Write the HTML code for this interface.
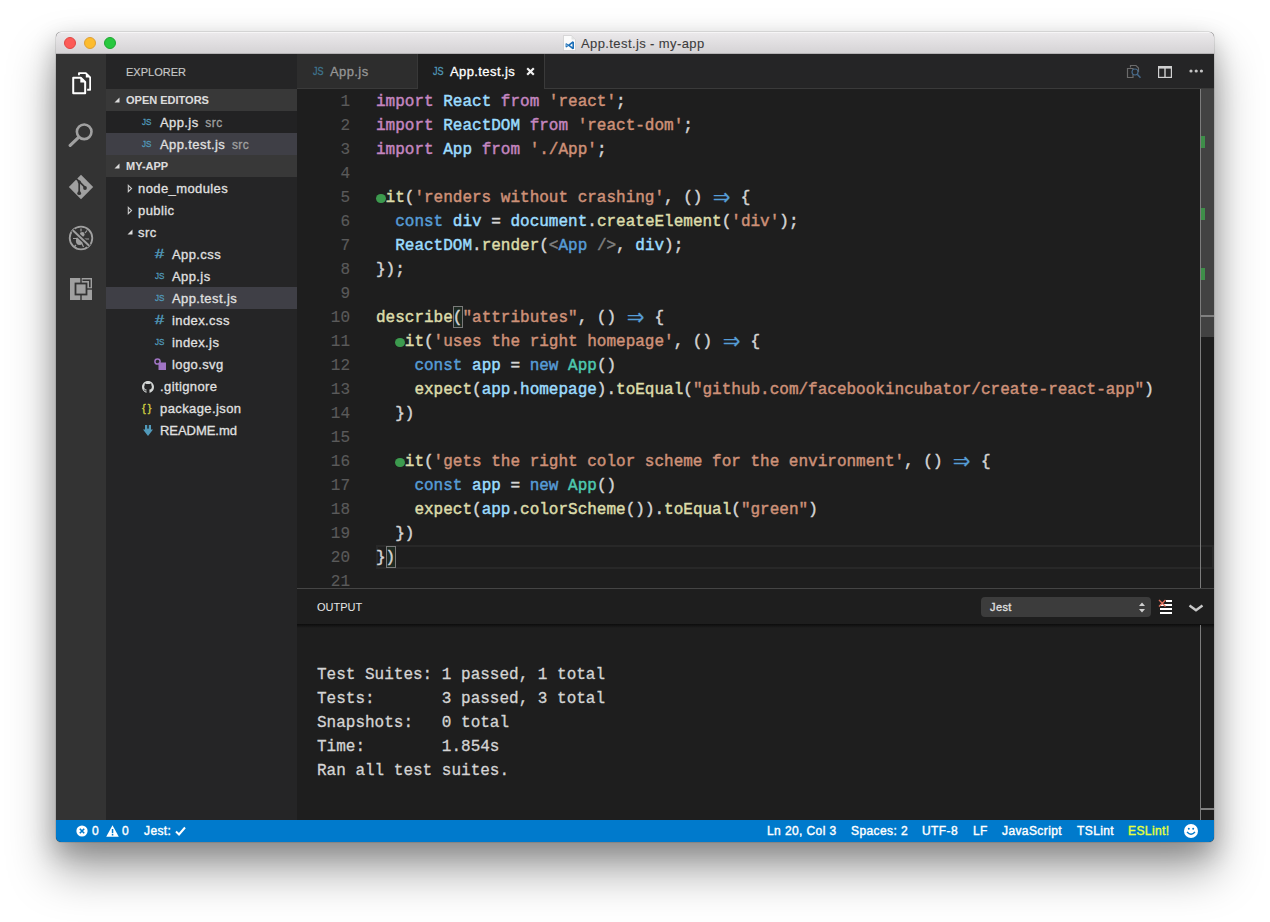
<!DOCTYPE html>
<html><head><meta charset="utf-8"><title>App.test.js - my-app</title>
<style>
*{box-sizing:border-box;margin:0;padding:0}
html,body{width:1270px;height:922px;background:#fff;overflow:hidden}
body{font-family:"Liberation Sans",sans-serif;position:relative;-webkit-font-smoothing:antialiased;letter-spacing:.4px;-webkit-text-stroke-width:.3px}
#win{position:absolute;left:56px;top:32px;width:1158px;height:810px;border-radius:5px;background:#1e1e1e;
 box-shadow:0 0 0 .5px rgba(0,0,0,.18),0 28px 46px 2px rgba(0,0,0,.34),0 10px 24px 2px rgba(0,0,0,.2);}
#clip{position:absolute;inset:0;border-radius:5px;overflow:hidden}
.abs{position:absolute}
#title{left:0;top:0;width:1158px;height:22px;background:linear-gradient(#ebe9eb,#d5d3d5);border-bottom:1px solid #b4b2b4;border-top:1px solid #f6f5f6}
#title .tl{position:absolute;top:4px;width:12px;height:12px;border-radius:50%}
#title .t{position:absolute;left:525px;top:3px;font-size:13px;line-height:15px;color:#3c3c3c;white-space:nowrap;-webkit-text-stroke-width:.1px}
#act{left:0;top:22px;width:50px;height:766px;background:#333333}
#side{left:50px;top:22px;width:191px;height:766px;background:#252526}
#side .hd{position:absolute;left:0;width:191px;height:22px;background:#383838;color:#dcdcdc;font-size:11px;font-weight:bold;line-height:22px;padding-left:20px;letter-spacing:0;-webkit-text-stroke-width:.1px}
#side .row{position:absolute;left:0;width:191px;height:22px;font-size:13px;line-height:22px;color:#e0e0e0;white-space:nowrap}
#side .row.sel{background:#3f3f46}
#side .row.dk{background:#222223}
#side .row span.n{position:absolute;top:1px}
#side .row span.d{color:#a0a0a0;font-size:12px}
.ic{position:absolute;top:0;font-size:9.4px;font-weight:normal;color:#519aba;letter-spacing:0;-webkit-text-stroke-width:.3px;transform:scaleX(.86);transform-origin:0 50%}
#tabs{left:241px;top:22px;width:917px;height:35px;background:#252526}
#edit{left:241px;top:57px;width:917px;height:500px;background:#1e1e1e}
.code{letter-spacing:0;font-family:"Liberation Mono",monospace;font-size:16px;line-height:24px;white-space:pre;-webkit-text-stroke-width:.45px}
#edit .ln{margin-top:1px;position:absolute;left:0;width:53px;text-align:right;color:#5a5a5a;-webkit-text-stroke-width:.15px}
#edit .cl{margin-top:1px;position:absolute;left:79px;color:#d4d4d4}
.k{color:#c586c0}.v{color:#9cdcfe}.s{color:#ce9178}.b{color:#569cd6}.f{color:#dcdcaa}.c{color:#4ec9b0}.g{color:#808080}
.ar{display:inline-block;width:19.2px;text-align:center;color:#569cd6;transform:scale(1.8,1.9);-webkit-text-stroke-width:.1px}
.dot{display:inline-block;width:9.6px;height:9px;border-radius:50%;background:#3c9a4e;vertical-align:-0.5px}
#panel{left:241px;top:556px;width:917px;height:232px;background:#1e1e1e;border-top:1px solid #454545}
#status{left:0;top:788px;width:1158px;height:22px;background:#007acc;color:#fff;font-size:12px;line-height:22px;white-space:nowrap;-webkit-text-stroke-width:.4px}
#status span{position:absolute;top:0}
</style></head><body>
<div id="win"><div id="clip">
<div id="title" class="abs">
 <div class="tl" style="left:8px;background:#fc5b57;border:1px solid #df4744"></div>
 <div class="tl" style="left:28px;background:#fdbc2e;border:1px solid #de9f34"></div>
 <div class="tl" style="left:48px;background:#28c83f;border:1px solid #1ea631"></div>
 <svg class="abs" style="left:507px;top:2px" width="13" height="16" viewBox="0 0 13 16"><path d="M.5 .5H8.5L12.5 4.5V15.5H.5Z" fill="#fbfbfb" stroke="#c4c4c4" stroke-width=".6"/><path d="M8.5 .5V4.5H12.5Z" fill="#e2e2e2"/><path d="M9.6 6.3L5.4 9.6L3.4 8.2L2.6 8.6V12L3.4 12.4L5.4 11L9.6 14.3L11 13.7V6.9ZM9.4 8.6V12L7 10.3ZM3.6 9.3L4.6 10.3L3.6 11.3Z" fill="#1b6fb8" fill-rule="evenodd"/></svg>
 <div class="t">App.test.js - my-app</div>
</div>
<div id="act" class="abs">
 <svg class="abs" style="left:15.6px;top:18.2px" width="19.4" height="22.8" viewBox="0 0 21 25"><path d="M7.5 3.5V1.2H15L19.8 6V19.5H16.5" fill="none" stroke="#fff" stroke-width="2" stroke-linejoin="round"/><path d="M15 1.2V6H19.8Z" fill="#fff"/><path d="M1.2 6.2H9.5L14.3 11V23.3H1.2Z" fill="none" stroke="#fff" stroke-width="2.2" stroke-linejoin="round"/><path d="M9 6.2V11.5H14.3Z" fill="#fff"/></svg>
 <svg class="abs" style="left:12px;top:68px" width="26" height="26" viewBox="0 0 26 26"><circle cx="16.2" cy="9.8" r="7.3" fill="none" stroke="#a0a0a0" stroke-width="2.6"/><path d="M10.6 15.4L2.2 23.4" stroke="#a0a0a0" stroke-width="3.2" stroke-linecap="round"/></svg>
 <svg class="abs" style="left:12px;top:120px" width="26" height="26" viewBox="0 0 26 26"><path d="M13 .8L25.2 13L13 25.2L.8 13Z" fill="#a0a0a0"/><g stroke="#333" stroke-width="1.7" fill="none"><path d="M11.2 7V19"/><path d="M8.2 4.6L16.8 13.2"/></g><circle cx="11.2" cy="19.2" r="1.9" fill="#333"/><circle cx="17" cy="14" r="1.9" fill="#333"/><circle cx="11.2" cy="7.8" r="1.6" fill="#333"/></svg>
 <svg class="abs" style="left:12px;top:171px" width="26" height="26" viewBox="0 0 26 26"><circle cx="13" cy="13" r="11.3" fill="none" stroke="#a0a0a0" stroke-width="1.8"/><ellipse cx="11.5" cy="15.8" rx="3.6" ry="4.2" fill="#a0a0a0"/><circle cx="14.2" cy="9.4" r="2.4" fill="#a0a0a0"/><g stroke="#a0a0a0" stroke-width="1.2" fill="none"><path d="M5 13.5H9M14 18.5L15.5 22M16 14H21M13 6.5V3.5M17 8L19 5.5M8 20L6 22"/></g><path d="M4.8 5.2L21.2 20.8" stroke="#333" stroke-width="4.5"/><path d="M4.8 5.2L21.2 20.8" stroke="#a0a0a0" stroke-width="1.9"/></svg>
 <svg class="abs" style="left:14px;top:224px" width="22" height="22" viewBox="0 0 22 22"><rect x="0" y="0" width="22" height="22" fill="#a0a0a0"/><rect x="4.6" y="4.6" width="12.8" height="12.8" fill="#333"/><rect x="6.4" y="6.4" width="9.2" height="9.2" fill="#a0a0a0"/><rect x="10.3" y="0" width="1.4" height="5" fill="#333"/><rect x="10.3" y="17" width="1.4" height="5" fill="#333"/><rect x="17" y="10.3" width="5" height="1.4" fill="#333"/><path d="M12.5 2.2H19.8V9.2" fill="none" stroke="#333" stroke-width="1.6"/></svg>
</div>
<div id="side" class="abs">
 <div class="abs" style="left:20px;top:11px;font-size:11px;line-height:14px;color:#c8c8c8;letter-spacing:0;-webkit-text-stroke-width:.15px">EXPLORER</div>
 <div class="hd" style="top:35px"><svg class="abs" style="left:8px;top:8px" width="6" height="6"><path d="M5.5 .5V5.5H.5Z" fill="#dcdcdc"/></svg>OPEN EDITORS</div>
 <div class="row dk" style="top:57px"><span class="ic" style="left:36px">JS</span><span class="n" style="left:54px">App.js <span class="d">&thinsp;src</span></span></div>
 <div class="row sel" style="top:79px"><span class="ic" style="left:36px">JS</span><span class="n" style="left:54px">App.test.js <span class="d">&thinsp;src</span></span></div>
 <div class="hd" style="top:101px"><svg class="abs" style="left:8px;top:8px" width="6" height="6"><path d="M5.5 .5V5.5H.5Z" fill="#dcdcdc"/></svg>MY-APP</div>
 <div class="row" style="top:123px"><svg class="abs" style="left:21px;top:7px" width="6" height="9"><path d="M1.3 1.3L4.6 4.5L1.3 7.7Z" fill="none" stroke="#c8c8c8" stroke-width="1.1"/></svg><span class="n" style="left:32px">node_modules</span></div>
 <div class="row" style="top:145px"><svg class="abs" style="left:21px;top:7px" width="6" height="9"><path d="M1.3 1.3L4.6 4.5L1.3 7.7Z" fill="none" stroke="#c8c8c8" stroke-width="1.1"/></svg><span class="n" style="left:32px">public</span></div>
 <div class="row" style="top:167px"><svg class="abs" style="left:21px;top:8px" width="6" height="6"><path d="M5.5 .5V5.5H.5Z" fill="#dcdcdc"/></svg><span class="n" style="left:32px">src</span></div>
 <div class="row" style="top:189px"><span class="ic" style="left:49px;font-size:13px;letter-spacing:0;-webkit-text-stroke-width:.4px;transform:scaleX(1.25)">#</span><span class="n" style="left:66px">App.css</span></div>
 <div class="row" style="top:211px"><span class="ic" style="left:49px">JS</span><span class="n" style="left:66px">App.js</span></div>
 <div class="row sel" style="top:233px"><span class="ic" style="left:49px">JS</span><span class="n" style="left:66px">App.test.js</span></div>
 <div class="row" style="top:255px"><span class="ic" style="left:49px;font-size:13px;letter-spacing:0;-webkit-text-stroke-width:.4px;transform:scaleX(1.25)">#</span><span class="n" style="left:66px">index.css</span></div>
 <div class="row" style="top:277px"><span class="ic" style="left:49px">JS</span><span class="n" style="left:66px">index.js</span></div>
 <div class="row" style="top:299px"><svg class="abs" style="left:48px;top:5px" width="12" height="12"><circle cx="3.5" cy="3.5" r="2.6" fill="none" stroke="#a074c4" stroke-width="1.5"/><rect x="4.5" y="4.5" width="7.5" height="7.5" fill="#a074c4"/></svg><span class="n" style="left:66px">logo.svg</span></div>
 <div class="row" style="top:321px"><svg class="abs" style="left:36px;top:5.5px" width="12" height="12" viewBox="0 0 16 16"><path fill="#d4d7d6" d="M8 0C3.58 0 0 3.58 0 8c0 3.54 2.29 6.53 5.47 7.59.4.07.55-.17.55-.38 0-.19-.01-.82-.01-1.49-2.01.37-2.53-.49-2.69-.94-.09-.23-.48-.94-.82-1.13-.28-.15-.68-.52-.01-.53.63-.01 1.08.58 1.23.82.72 1.21 1.87.87 2.33.66.07-.52.28-.87.51-1.07-1.78-.2-3.64-.89-3.64-3.95 0-.87.31-1.59.82-2.15-.08-.2-.36-1.02.08-2.12 0 0 .67-.21 2.2.82.64-.18 1.32-.27 2-.27s1.36.09 2 .27c1.53-1.04 2.2-.82 2.2-.82.44 1.1.16 1.92.08 2.12.51.56.82 1.27.82 2.15 0 3.07-1.87 3.75-3.65 3.95.29.25.54.73.54 1.48 0 1.07-.01 1.93-.01 2.2 0 .21.15.46.55.38A8.01 8.01 0 0016 8c0-4.42-3.58-8-8-8z"/></svg><span class="n" style="left:54px">.gitignore</span></div>
 <div class="row" style="top:343px"><span class="ic" style="left:36px;color:#cbcb41;font-size:11px;letter-spacing:2px;transform:none;-webkit-text-stroke-width:.4px">{}</span><span class="n" style="left:54px">package.json</span></div>
 <div class="row" style="top:365px"><svg class="abs" style="left:36.5px;top:6px" width="10" height="11"><path d="M2 0H4.2V3.2L5 4L5.8 3.2V0H8V4.5H10L5 11L0 4.5H2Z" fill="#519aba"/></svg><span class="n" style="left:54px;letter-spacing:-.05px">README.md</span></div>
</div>
<div id="tabs" class="abs">
 <div class="abs" style="left:0;top:0;width:121px;height:35px;background:#2d2d2d;border-right:1px solid #383838;border-bottom:1px solid #3a3a3a"></div>
 <div class="abs" style="left:121px;top:0;width:126px;height:35px;background:#1e1e1e"></div>
 <div class="abs" style="left:247px;top:0;width:670px;height:35px;border-left:1px solid #3a3a3a;border-bottom:1px solid #3a3a3a"></div>
 <span class="ic" style="left:16px;top:10px;line-height:14px;color:#3f7690;font-size:10.5px">JS</span>
 <span class="abs" style="left:33px;top:9px;font-size:13px;line-height:17px;color:#969696">App.js</span>
 <span class="ic" style="left:136px;top:10px;line-height:14px;font-size:10.5px">JS</span>
 <span class="abs" style="left:153px;top:9px;font-size:13px;line-height:17px;color:#fff">App.test.js</span>
 <svg class="abs" style="left:229px;top:13px" width="9" height="9"><path d="M1.2 1.2L7.8 7.8M7.8 1.2L1.2 7.8" stroke="#f0f0f0" stroke-width="2.2"/></svg>
 <svg class="abs" style="left:828px;top:9px" width="18" height="18" viewBox="0 0 18 18"><path d="M5.5 4.5V2.5H11L13.5 5V9" fill="none" stroke="#6b6b6b" stroke-width="1.2"/><path d="M2.5 5.5H8V14.5H2.5Z" fill="none" stroke="#6b6b6b" stroke-width="1.2"/><circle cx="10" cy="9" r="3" fill="#252526" stroke="#46698a" stroke-width="1.2"/><path d="M12.2 11.3L15.5 14.8" stroke="#46698a" stroke-width="1.6"/></svg>
 <svg class="abs" style="left:861px;top:12px" width="14" height="12"><rect x=".6" y=".6" width="12.8" height="10.8" fill="none" stroke="#d0d0d0" stroke-width="1.2"/><rect x="0" y="0" width="14" height="2.6" fill="#d0d0d0"/><rect x="6.3" y="0" width="1.4" height="12" fill="#d0d0d0"/></svg>
 <svg class="abs" style="left:892px;top:15px" width="15" height="4"><circle cx="2" cy="2" r="1.6" fill="#c4c4c4"/><circle cx="7.2" cy="2" r="1.6" fill="#c4c4c4"/><circle cx="12.4" cy="2" r="1.6" fill="#c4c4c4"/></svg>
</div>
<div id="edit" class="abs code"><div class="abs" style="left:79px;top:456px;width:838px;height:24px;border:2px solid #282828"></div>
<div class="abs" style="left:155.8px;top:217px;width:10px;height:22px;border:1px solid #7a7a7a;background:#1e2a22"></div>
<div class="abs" style="left:88.6px;top:457px;width:10px;height:22px;border:1px solid #7a7a7a;background:#1e2a22"></div>
<div class="ln" style="top:0px">1</div><div class="cl" style="top:0px"><span class="k">import</span> <span class="v">React</span> <span class="k">from</span> <span class="s">'react'</span>;</div>
<div class="ln" style="top:24px">2</div><div class="cl" style="top:24px"><span class="k">import</span> <span class="v">ReactDOM</span> <span class="k">from</span> <span class="s">'react-dom'</span>;</div>
<div class="ln" style="top:48px">3</div><div class="cl" style="top:48px"><span class="k">import</span> <span class="v">App</span> <span class="k">from</span> <span class="s">'./App'</span>;</div>
<div class="ln" style="top:72px">4</div><div class="cl" style="top:72px"></div>
<div class="ln" style="top:96px">5</div><div class="cl" style="top:96px"><span class="dot"></span><span class="f">it</span>(<span class="s">'renders without crashing'</span>, () <span class="ar">⇒</span> {</div>
<div class="ln" style="top:120px">6</div><div class="cl" style="top:120px">  <span class="b">const</span> <span class="v">div</span> = <span class="v">document</span>.<span class="f">createElement</span>(<span class="s">'div'</span>);</div>
<div class="ln" style="top:144px">7</div><div class="cl" style="top:144px">  <span class="v">ReactDOM</span>.<span class="f">render</span>(<span class="g">&lt;</span><span class="b">App</span> <span class="g">/&gt;</span>, <span class="v">div</span>);</div>
<div class="ln" style="top:168px">8</div><div class="cl" style="top:168px">});</div>
<div class="ln" style="top:192px">9</div><div class="cl" style="top:192px"></div>
<div class="ln" style="top:216px">10</div><div class="cl" style="top:216px"><span class="f">describe</span>(<span class="s">"attributes"</span>, () <span class="ar">⇒</span> {</div>
<div class="ln" style="top:240px">11</div><div class="cl" style="top:240px">  <span class="dot"></span><span class="f">it</span>(<span class="s">'uses the right homepage'</span>, () <span class="ar">⇒</span> {</div>
<div class="ln" style="top:264px">12</div><div class="cl" style="top:264px">    <span class="b">const</span> <span class="v">app</span> = <span class="b">new</span> <span class="c">App</span>()</div>
<div class="ln" style="top:288px">13</div><div class="cl" style="top:288px">    <span class="f">expect</span>(<span class="v">app</span>.<span class="v">homepage</span>).<span class="f">toEqual</span>(<span class="s">"github.com/facebookincubator/create-react-app"</span>)</div>
<div class="ln" style="top:312px">14</div><div class="cl" style="top:312px">  })</div>
<div class="ln" style="top:336px">15</div><div class="cl" style="top:336px"></div>
<div class="ln" style="top:360px">16</div><div class="cl" style="top:360px">  <span class="dot"></span><span class="f">it</span>(<span class="s">'gets the right color scheme for the environment'</span>, () <span class="ar">⇒</span> {</div>
<div class="ln" style="top:384px">17</div><div class="cl" style="top:384px">    <span class="b">const</span> <span class="v">app</span> = <span class="b">new</span> <span class="c">App</span>()</div>
<div class="ln" style="top:408px">18</div><div class="cl" style="top:408px">    <span class="f">expect</span>(<span class="v">app</span>.<span class="f">colorScheme</span>()).<span class="f">toEqual</span>(<span class="s">"green"</span>)</div>
<div class="ln" style="top:432px">19</div><div class="cl" style="top:432px">  })</div>
<div class="ln" style="top:456px">20</div><div class="cl" style="top:456px">})</div>
<div class="ln" style="top:480px">21</div><div class="cl" style="top:480px"></div>
<div class="abs" style="left:903px;top:0;width:14px;height:500px;border-left:1px solid #7c7c7c"></div>
<div class="abs" style="left:904px;top:0;width:13px;height:248px;background:#424242"></div>
<div class="abs" style="left:904px;top:226px;width:13px;height:2px;background:#808080"></div>
<div class="abs" style="left:904px;top:47px;width:4px;height:12px;background:#3e8e49"></div>
<div class="abs" style="left:904px;top:119px;width:4px;height:12px;background:#3e8e49"></div>
<div class="abs" style="left:904px;top:179px;width:4px;height:12px;background:#3e8e49"></div>
</div>
<div id="panel" class="abs">
 <div class="abs" style="left:20px;top:11px;font-size:11px;line-height:14px;color:#e7e7e7;letter-spacing:0;-webkit-text-stroke-width:0">OUTPUT</div>
 <div class="abs" style="left:0;top:35px;width:917px;height:4px;background:linear-gradient(rgba(0,0,0,.6),rgba(0,0,0,0))"></div>
 <div class="abs" style="left:684px;top:8px;width:170px;height:20px;border-radius:4px;background:#3c3c3c;color:#e0e0e0;font-size:11px;line-height:20px;padding-left:9px">Jest</div>
 <svg class="abs" style="left:842px;top:13px" width="6" height="11"><path d="M0 4L3 .5L6 4ZM0 7L3 10.5L6 7Z" fill="#d0d0d0"/></svg>
 <svg class="abs" style="left:861px;top:9px" width="15" height="16"><g fill="#fff"><rect x="8" y="2" width="6" height="2"/><rect x="2" y="6" width="12" height="2"/><rect x="2" y="10" width="12" height="2"/><rect x="2" y="14" width="12" height="2"/></g><path d="M1 2L7.5 8.5M7.5 2L1 8.5" stroke="#e0705c" stroke-width="1.4"/></svg>
 <svg class="abs" style="left:891px;top:15px" width="16" height="9"><path d="M1.5 1.5L8 6.3L14.5 1.5" fill="none" stroke="#c8c8c8" stroke-width="2.4"/></svg>
 <div class="abs code" style="left:20px;top:74px;color:#d4d4d4;-webkit-text-stroke-width:.3px">Test Suites: 1 passed, 1 total
Tests:       3 passed, 3 total
Snapshots:   0 total
Time:        1.854s
Ran all test suites.</div>
 <div class="abs" style="left:903px;top:36px;width:14px;height:196px;border-left:1px solid #7c7c7c"></div>
 <div class="abs" style="left:904px;top:219px;width:13px;height:2px;background:#808080"></div>
</div>
<div id="status" class="abs">
 <svg class="abs" style="left:20px;top:5px" width="12" height="12"><circle cx="6" cy="6" r="5.6" fill="#fff"/><path d="M3.8 3.8L8.2 8.2M8.2 3.8L3.8 8.2" stroke="#007acc" stroke-width="1.6"/></svg>
 <span style="left:36px">0</span>
 <svg class="abs" style="left:50px;top:5px" width="13" height="12"><path d="M6.5 .3L12.8 11.7H.2Z" fill="#fff"/><rect x="5.8" y="4" width="1.5" height="4.2" fill="#007acc"/><rect x="5.8" y="9" width="1.5" height="1.5" fill="#007acc"/></svg>
 <span style="left:66px">0</span>
 <span style="left:88px">Jest:</span>
 <svg class="abs" style="left:119px;top:6px" width="11" height="10"><path d="M1 5.5L4 8.5L10 1.5" fill="none" stroke="#fff" stroke-width="2"/></svg>
 <span style="left:711px">Ln 20, Col 3</span>
 <span style="left:795px">Spaces: 2</span>
 <span style="left:866px">UTF-8</span>
 <span style="left:917px">LF</span>
 <span style="left:946px">JavaScript</span>
 <span style="left:1021px">TSLint</span>
 <span style="left:1072px;color:#e6ff3c">ESLint!</span>
 <svg class="abs" style="left:1128px;top:4px" width="14" height="14"><circle cx="7" cy="7" r="7" fill="#fff"/><circle cx="4.8" cy="4.8" r="1" fill="#007acc"/><circle cx="9.2" cy="4.8" r="1" fill="#007acc"/><path d="M3 8Q7 12.5 11 8" fill="none" stroke="#007acc" stroke-width="1.3"/></svg>
</div>
</div></div>
</body></html>
